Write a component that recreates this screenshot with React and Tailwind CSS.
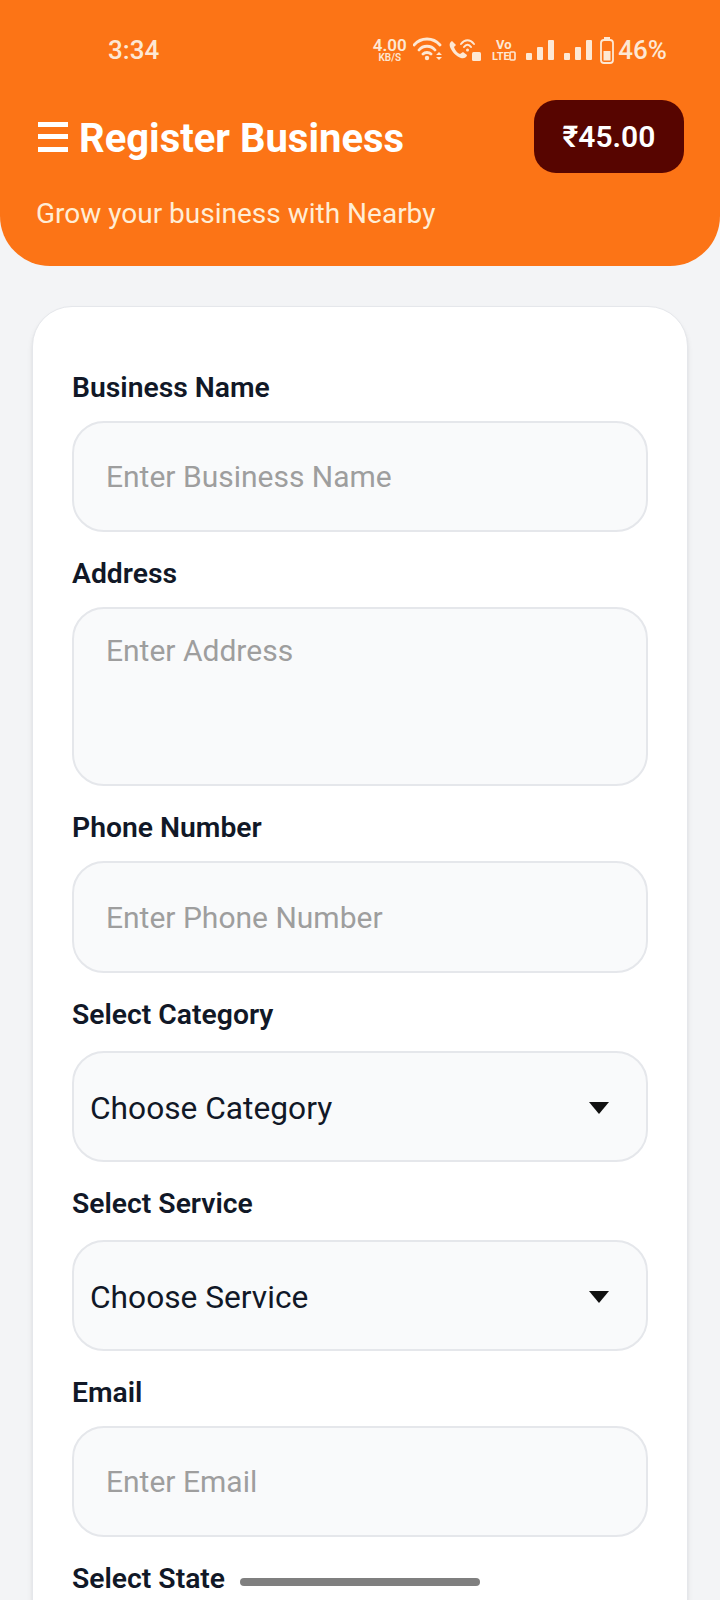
const field = "rounded-[32px] border-2 border-[#e5e7eb] bg-[#f9fafb]";
const peach = "#fde8d4";

function Label({ children }) {
  return <div className="text-[28.3px] leading-[34px] font-semibold text-[#111827]">{children}</div>;
}

function TextField({ label, placeholder, height = "h-[111px]" }) {
  return (
    <div>
      <Label>{label}</Label>
      <div className={`${field} ${height} mt-[16px] flex items-center px-[32px] text-[30px] text-[#9e9e9e]`}>{placeholder}</div>
    </div>
  );
}

function SelectField({ label, value }) {
  return (
    <div>
      <Label>{label}</Label>
      <div className={`${field} mt-[19px] flex h-[111px] items-center justify-between pl-[16px] pr-[37px] text-[31.7px] text-[#111827]`}>
        <span className="pt-[5px]">{value}</span>
        <svg className="mt-[2px]" width="20" height="12" viewBox="0 0 20 12"><path d="M0 0h20L10 12z" fill="#111111" /></svg>
      </div>
    </div>
  );
}

function Signal({ x }) {
  return (
    <g fill={peach}>
      <rect x={x} y="21" width="6" height="7" rx="1" />
      <rect x={x + 11} y="15" width="6" height="13" rx="1" />
      <rect x={x + 22} y="8" width="6" height="20" rx="1" />
    </g>
  );
}

function StatusIcons() {
  return (
    <div className="flex items-center text-[#fde8d4]">
      <div className="flex w-[35px] flex-col items-center font-semibold">
        <span className="text-[17px] leading-[16px]">4.00</span>
        <span className="text-[10px] leading-[10px]">KB/S</span>
      </div>
      <svg className="ml-[6px]" width="201" height="36" viewBox="0 0 201 36" fill="none">
        <path d="M1 13c7-8 19-8 26 0M6 18c4-5 12-5 16 0M10 22c2-2 6-2 8 0" stroke={peach} strokeWidth="2.8" strokeLinecap="round" />
        <circle cx="14" cy="26" r="2.2" fill={peach} />
        <path d="M23 23l3-3 3 3zM23 25l3 3 3-3z" fill={peach} />
        <path d="M39 9c-2 1-3 3-2 6 2 5 6 9 11 11 3 1 6-1 6-3l-4-3-3 2c-3-1-5-4-6-7l2-2z" fill={peach} />
        <path d="M48 12c4-5 9-5 13 0M51 15c2-3 5-3 7 0" stroke={peach} strokeWidth="2" strokeLinecap="round" />
        <circle cx="54.5" cy="18" r="1.5" fill={peach} />
        <rect x="59" y="20" width="9" height="9" rx="1.5" fill={peach} />
        <text x="83" y="17" fontSize="13" fontWeight="700" fill={peach} fontFamily="Roboto">Vo</text>
        <text x="79" y="28" fontSize="11" fontWeight="700" fill={peach} fontFamily="Roboto">LTE</text>
        <rect x="97" y="20" width="5" height="8" rx="1" stroke={peach} strokeWidth="1.6" />
        <Signal x={113} />
        <Signal x={151} />
        <rect x="188" y="8" width="12" height="23" rx="3" stroke={peach} strokeWidth="1.8" />
        <rect x="191" y="5" width="6" height="2" fill={peach} />
        <rect x="190.5" y="19" width="7" height="9.5" fill={peach} />
      </svg>
      <span className="ml-[4px] text-[26px] font-medium">46%</span>
    </div>
  );
}

export default function App() {
  return (
    <div className="relative h-[1600px] w-[720px] overflow-hidden bg-[#f3f4f6] font-['Roboto',sans-serif]">
      <div className="h-[266px] rounded-b-[50px] bg-[#fc7416] px-[36px]">
        <div className="flex h-[100px] items-center justify-between pl-[72px] pr-[17px]">
          <span className="text-[26px] font-medium text-[#fde8d4]">3:34</span>
          <StatusIcons />
        </div>
        <div className="flex items-center justify-between">
          <div className="flex items-center gap-[11px] pl-[2px]">
            <div className="flex h-[30px] w-[30px] flex-col justify-between">
              <div className="h-[5px] bg-white" />
              <div className="h-[5px] bg-white" />
              <div className="h-[5px] bg-white" />
            </div>
            <span className="mt-[5px] text-[40px] leading-[42px] font-bold text-white">Register Business</span>
          </div>
          <div className="flex h-[73px] w-[150px] items-center justify-center rounded-[22px] bg-[#570500] text-[30px] font-semibold text-white">₹45.00</div>
        </div>
        <div className="mt-[25px] text-[28px] leading-[32px] text-[#ffedd5]">Grow your business with Nearby</div>
      </div>

      <div className="mx-[32px] mt-[40px] flex flex-col gap-[25px] rounded-t-[40px] border border-[#e5e7eb] bg-white px-[39px] pt-[64px] pb-[40px] shadow-md">
        <TextField label="Business Name" placeholder="Enter Business Name" />
        <div>
          <Label>Address</Label>
          <div className={`${field} mt-[16px] h-[179px] px-[32px] pt-[24px] text-[30px] leading-[36px] text-[#9e9e9e]`}>Enter Address</div>
        </div>
        <TextField label="Phone Number" placeholder="Enter Phone Number" height="h-[112px]" />
        <SelectField label="Select Category" value="Choose Category" />
        <SelectField label="Select Service" value="Choose Service" />
        <TextField label="Email" placeholder="Enter Email" />
        <Label>Select State</Label>
      </div>

      <div className="absolute bottom-[14px] left-[240px] h-[8px] w-[240px] rounded-full bg-[#7f7f7f]" />
    </div>
  );
}
